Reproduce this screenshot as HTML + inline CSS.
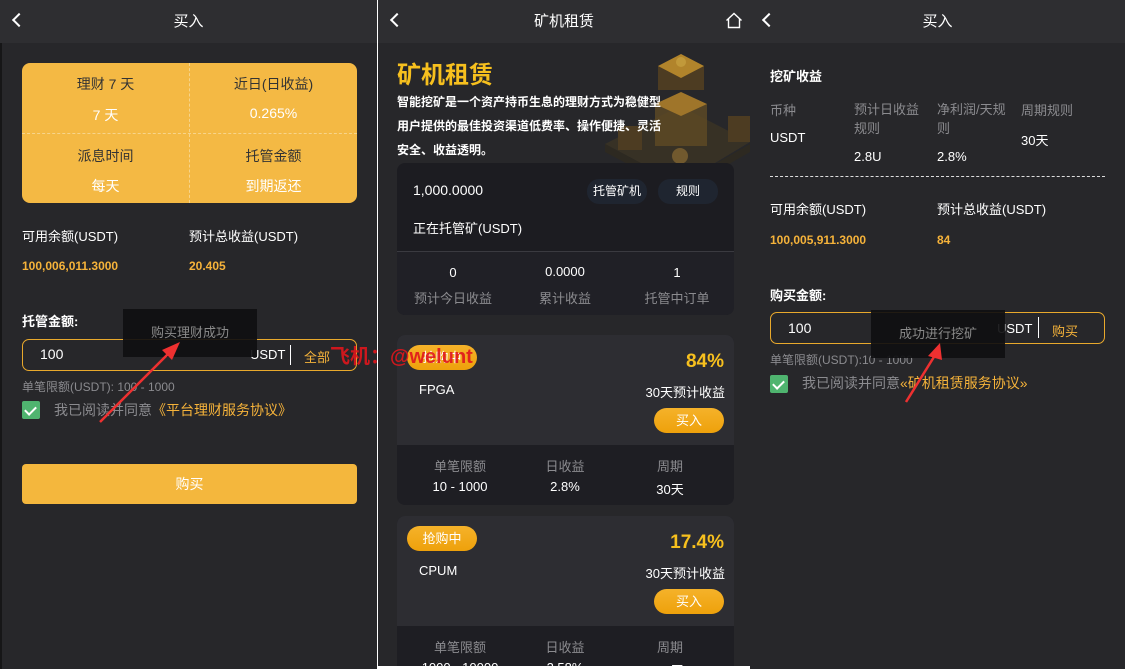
<!DOCTYPE html><html><head><meta charset="utf-8"><style>
*{margin:0;padding:0;box-sizing:border-box}
body{width:1125px;height:669px;background:#fff;position:relative;overflow:hidden;font-family:"Liberation Sans","Noto Sans CJK SC",sans-serif;color:#fff}
.a{position:absolute;white-space:nowrap}
.p{position:absolute;top:0;background:#27272a;overflow:hidden}
.h{position:absolute;left:0;right:0;top:0;height:43px;background:#2e2e31;font-size:15px;text-align:center;line-height:43px}
.bk{position:absolute;left:14px;top:15px;width:10px;height:10px;border-left:2px solid #fff;border-bottom:2px solid #fff;transform:rotate(45deg)}
.y{color:#f6b33a;font-weight:bold}
.g{color:#8b8b8f}
.btn{position:absolute;background:linear-gradient(#f5b22a,#eea10b);border-radius:14px;text-align:center;color:#fff}
.toast{position:absolute;background:rgba(15,15,17,.92);color:#8a8a8a;font-size:13px;text-align:center}
.chk{position:absolute;width:18px;height:18px;background:#4fb46f;border-radius:2px}
.chk:after{content:"";position:absolute;left:5px;top:3px;width:5px;height:9px;border-right:2px solid #fff;border-bottom:2px solid #fff;transform:rotate(45deg)}
</style></head><body>
<!-- Panel 1 -->
<div class="p" style="left:0;width:377px;height:669px;">
 <div style="position:absolute;left:0;top:0;width:2px;height:669px;background:#161617"></div>
 <div class="h">买入</div><div class="bk"></div>
 <div class="a" style="left:22px;top:63px;width:335px;height:140px;background:#f4b944;border-radius:8px"></div>
 <div class="a" style="left:189px;top:63px;width:1px;height:140px;border-left:1px dashed #f7d48a"></div>
 <div class="a" style="left:22px;top:133px;width:335px;height:1px;border-top:1px dashed #f7d48a"></div>
 <div class="a" style="left:22px;width:167px;text-align:center;top:74px;font-size:14px;color:#333">理财 7 天</div>
 <div class="a" style="left:22px;width:167px;text-align:center;top:105px;font-size:14px">7 天</div>
 <div class="a" style="left:190px;width:167px;text-align:center;top:74px;font-size:14px;color:#333">近日(日收益)</div>
 <div class="a" style="left:190px;width:167px;text-align:center;top:105px;font-size:14px">0.265%</div>
 <div class="a" style="left:22px;width:167px;text-align:center;top:146px;font-size:14px;color:#333">派息时间</div>
 <div class="a" style="left:22px;width:167px;text-align:center;top:176px;font-size:14px">每天</div>
 <div class="a" style="left:190px;width:167px;text-align:center;top:146px;font-size:14px;color:#333">托管金额</div>
 <div class="a" style="left:190px;width:167px;text-align:center;top:176px;font-size:14px">到期返还</div>
 <div class="a" style="left:22px;top:226px;font-size:13px">可用余额(USDT)</div>
 <div class="a" style="left:189px;top:226px;font-size:13px">预计总收益(USDT)</div>
 <div class="a y" style="left:22px;top:259px;font-size:12px">100,006,011.3000</div>
 <div class="a y" style="left:189px;top:259px;font-size:12px">20.405</div>
 <div class="a" style="left:22px;top:311px;font-size:13px;font-weight:bold">托管金额:</div>
 <div class="a" style="left:22px;top:339px;width:335px;height:32px;border:1px solid #e9a92c;border-radius:7px"></div>
 <div class="a" style="left:40px;top:346px;font-size:14px">100</div>
 <div class="a" style="left:250px;top:347px;font-size:13px">USDT</div>
 <div class="a" style="left:290px;top:345px;width:1px;height:20px;background:#fff"></div>
 <div class="a" style="left:304px;top:347px;font-size:13px;color:#f6b33a">全部</div>
 <div class="a g" style="left:22px;top:378px;font-size:12px">单笔限额(USDT): 100 - 1000</div>
 <div class="chk" style="left:22px;top:401px"></div>
 <div class="a" style="left:54px;top:400px;font-size:14px;color:#8b8b8f">我已阅读并同意<span style="color:#f6b33a">《平台理财服务协议》</span></div>
 <div class="btn" style="left:22px;top:464px;width:335px;height:40px;line-height:40px;border-radius:4px;font-size:14px;background:#f4b73d">购买</div>
 <div class="toast" style="left:123px;top:309px;width:134px;height:48px;line-height:48px">购买理财成功</div>
</div>
<div class="a" style="left:377px;top:0;width:1px;height:669px;background:#fff"></div>
<!-- Panel 2 -->
<div class="p" style="left:378px;width:372px;height:666px;">
 <div class="h">矿机租赁</div><div class="bk"></div>
 <svg style="position:absolute;right:7px;top:12px" width="18" height="17" viewBox="0 0 18 17"><path d="M1.5 8.5L9 1.5 16.5 8.5M3.5 7v8.5h11V7" fill="none" stroke="#fff" stroke-width="1.4"/></svg>
 <svg style="position:absolute;left:222px;top:44px" width="150" height="150" viewBox="0 0 150 150" opacity=".75"><polygon points="5,100 80,62 150,98 80,140" fill="#3d3524"/><polygon points="5,108 80,148 150,108 150,100 80,140 5,100" fill="#2f2a1e"/><rect x="55" y="60" width="52" height="42" fill="#7a5d24" opacity=".7"/><polygon points="55,60 81,48 107,60 81,72" fill="#c8902a"/><rect x="58" y="22" width="46" height="24" fill="#5a4420"/><polygon points="58,22 81,10 104,22 81,34" fill="#e0a32c"/><circle cx="81" cy="18" r="5" fill="#f5c040"/><rect x="128" y="72" width="22" height="26" fill="#5a4420"/><rect x="18" y="82" width="24" height="24" fill="#5a4420"/><circle cx="80" cy="112" r="8" fill="#8a6a30"/></svg>
 <div class="a" style="left:19px;top:55px;font-size:24px;font-weight:bold;color:#f7c01e">矿机租赁</div>
 <div class="a" style="left:19px;top:90px;font-size:12px;font-weight:bold;line-height:24px;white-space:normal;width:268px">智能挖矿是一个资产持币生息的理财方式为稳健型用户提供的最佳投资渠道低费率、操作便捷、灵活安全、收益透明。</div>
 <div class="a" style="left:19px;top:163px;width:337px;height:152px;background:#1c1c21;border-radius:8px;overflow:hidden">
  <div style="position:absolute;left:0;right:0;top:88px;bottom:0;background:#202026;border-top:1px solid #3a3a40"></div>
 </div>
 <div class="a" style="left:35px;top:182px;font-size:14px">1,000.0000</div>
 <div class="a" style="left:209px;top:179px;width:60px;height:25px;border-radius:12px;background:#1f2530;font-size:12px;text-align:center;line-height:25px">托管矿机</div>
 <div class="a" style="left:280px;top:179px;width:60px;height:25px;border-radius:12px;background:#1f2530;font-size:12px;text-align:center;line-height:25px">规则</div>
 <div class="a" style="left:35px;top:218px;font-size:13px">正在托管矿(USDT)</div>
 <div class="a" style="left:19px;width:112px;text-align:center;top:265px;font-size:13px">0</div>
 <div class="a" style="left:131px;width:112px;text-align:center;top:264px;font-size:13px">0.0000</div>
 <div class="a" style="left:243px;width:112px;text-align:center;top:265px;font-size:13px">1</div>
 <div class="a g" style="left:19px;width:112px;text-align:center;top:288px;font-size:13px">预计今日收益</div>
 <div class="a g" style="left:131px;width:112px;text-align:center;top:288px;font-size:13px">累计收益</div>
 <div class="a g" style="left:243px;width:112px;text-align:center;top:288px;font-size:13px">托管中订单</div>
 <div class="a" style="left:19px;top:335px;width:337px;height:170px;background:#1e1e23;border-radius:8px;overflow:hidden"><div style="height:110px;background:#2d2d32"></div></div>
 <div class="btn" style="left:29px;top:345px;width:70px;height:25px;line-height:25px;font-size:13px">抢购中</div>
 <div class="a" style="right:26px;top:351px;font-size:19px;font-weight:bold;color:#f7c01e">84%</div>
 <div class="a" style="left:41px;top:382px;font-size:13px">FPGA</div>
 <div class="a" style="right:25px;top:382px;font-size:13px">30天预计收益</div>
 <div class="btn" style="left:276px;top:408px;width:70px;height:25px;line-height:25px;font-size:13px">买入</div>
 <div class="a g" style="left:19px;width:126px;text-align:center;top:456px;font-size:13px">单笔限额</div>
 <div class="a g" style="left:131px;width:112px;text-align:center;top:456px;font-size:13px">日收益</div>
 <div class="a g" style="left:236px;width:112px;text-align:center;top:456px;font-size:13px">周期</div>
 <div class="a" style="left:19px;width:126px;text-align:center;top:479px;font-size:13px">10 - 1000</div>
 <div class="a" style="left:131px;width:112px;text-align:center;top:479px;font-size:13px">2.8%</div>
 <div class="a" style="left:236px;width:112px;text-align:center;top:479px;font-size:13px">30天</div>
 <div class="a" style="left:19px;top:516px;width:337px;height:170px;background:#1e1e23;border-radius:8px;overflow:hidden"><div style="height:110px;background:#2d2d32"></div></div>
 <div class="btn" style="left:29px;top:526px;width:70px;height:25px;line-height:25px;font-size:13px">抢购中</div>
 <div class="a" style="right:26px;top:532px;font-size:19px;font-weight:bold;color:#f7c01e">17.4%</div>
 <div class="a" style="left:41px;top:563px;font-size:13px">CPUM</div>
 <div class="a" style="right:25px;top:563px;font-size:13px">30天预计收益</div>
 <div class="btn" style="left:276px;top:589px;width:70px;height:25px;line-height:25px;font-size:13px">买入</div>
 <div class="a g" style="left:19px;width:126px;text-align:center;top:637px;font-size:13px">单笔限额</div>
 <div class="a g" style="left:131px;width:112px;text-align:center;top:637px;font-size:13px">日收益</div>
 <div class="a g" style="left:236px;width:112px;text-align:center;top:637px;font-size:13px">周期</div>
 <div class="a" style="left:19px;width:126px;text-align:center;top:660px;font-size:13px">1000 - 10000</div>
 <div class="a" style="left:131px;width:112px;text-align:center;top:660px;font-size:13px">2.58%</div>
 <div class="a" style="left:236px;width:112px;text-align:center;top:660px;font-size:13px">30天</div>
</div>
<!-- Panel 3 -->
<div class="p" style="left:750px;width:375px;height:669px;">
 <div class="h">买入</div><div class="bk"></div>
 <div class="a" style="left:20px;top:66px;font-size:13px;font-weight:bold">挖矿收益</div>
 <div class="a g" style="left:20px;top:100px;font-size:13px">币种</div>
 <div class="a g" style="left:104px;top:100px;font-size:13px;line-height:19px">预计日收益<br>规则</div>
 <div class="a g" style="left:187px;top:100px;font-size:13px;line-height:19px">净利润/天规<br>则</div>
 <div class="a g" style="left:271px;top:100px;font-size:13px">周期规则</div>
 <div class="a" style="left:20px;top:130px;font-size:13px">USDT</div>
 <div class="a" style="left:271px;top:130px;font-size:13px">30天</div>
 <div class="a" style="left:104px;top:149px;font-size:13px">2.8U</div>
 <div class="a" style="left:187px;top:149px;font-size:13px">2.8%</div>
 <div class="a" style="left:20px;top:176px;width:335px;border-top:1px dashed #ddd"></div>
 <div class="a" style="left:20px;top:199px;font-size:13px">可用余额(USDT)</div>
 <div class="a" style="left:187px;top:199px;font-size:13px">预计总收益(USDT)</div>
 <div class="a y" style="left:20px;top:233px;font-size:12px">100,005,911.3000</div>
 <div class="a y" style="left:187px;top:233px;font-size:12px">84</div>
 <div class="a" style="left:20px;top:285px;font-size:13px;font-weight:bold">购买金额:</div>
 <div class="a" style="left:20px;top:312px;width:335px;height:32px;border:1px solid #e9a92c;border-radius:7px"></div>
 <div class="a" style="left:38px;top:320px;font-size:14px">100</div>
 <div class="a" style="left:247px;top:321px;font-size:13px">USDT</div>
 <div class="a" style="left:288px;top:317px;width:1px;height:21px;background:#fff"></div>
 <div class="a" style="left:302px;top:321px;font-size:13px;color:#f6b33a">购买</div>
 <div class="a g" style="left:20px;top:351px;font-size:12px">单笔限额(USDT):10 - 1000</div>
 <div class="chk" style="left:20px;top:375px"></div>
 <div class="a" style="left:52px;top:373px;font-size:14px;color:#8b8b8f">我已阅读并同意<span style="color:#f6b33a">«矿机租赁服务协议»</span></div>
 <div class="toast" style="left:121px;top:310px;width:134px;height:48px;line-height:48px">成功进行挖矿</div>
</div>
<div class="a" style="left:330px;top:340px;font-size:20px;font-weight:bold;color:#e0161c;opacity:.9">飞机：@welunt</div>
<svg style="position:absolute;left:0;top:0" width="1125" height="669"><path d="M100 422L172 350" stroke="#ee3030" stroke-width="2.5"/><polygon points="180,342 162,350 172,360" fill="#ee3030"/><path d="M906 402L937 352" stroke="#ee3030" stroke-width="2.5"/><polygon points="940,343 928,356 942,360" fill="#ee3030"/></svg>
</body></html>
